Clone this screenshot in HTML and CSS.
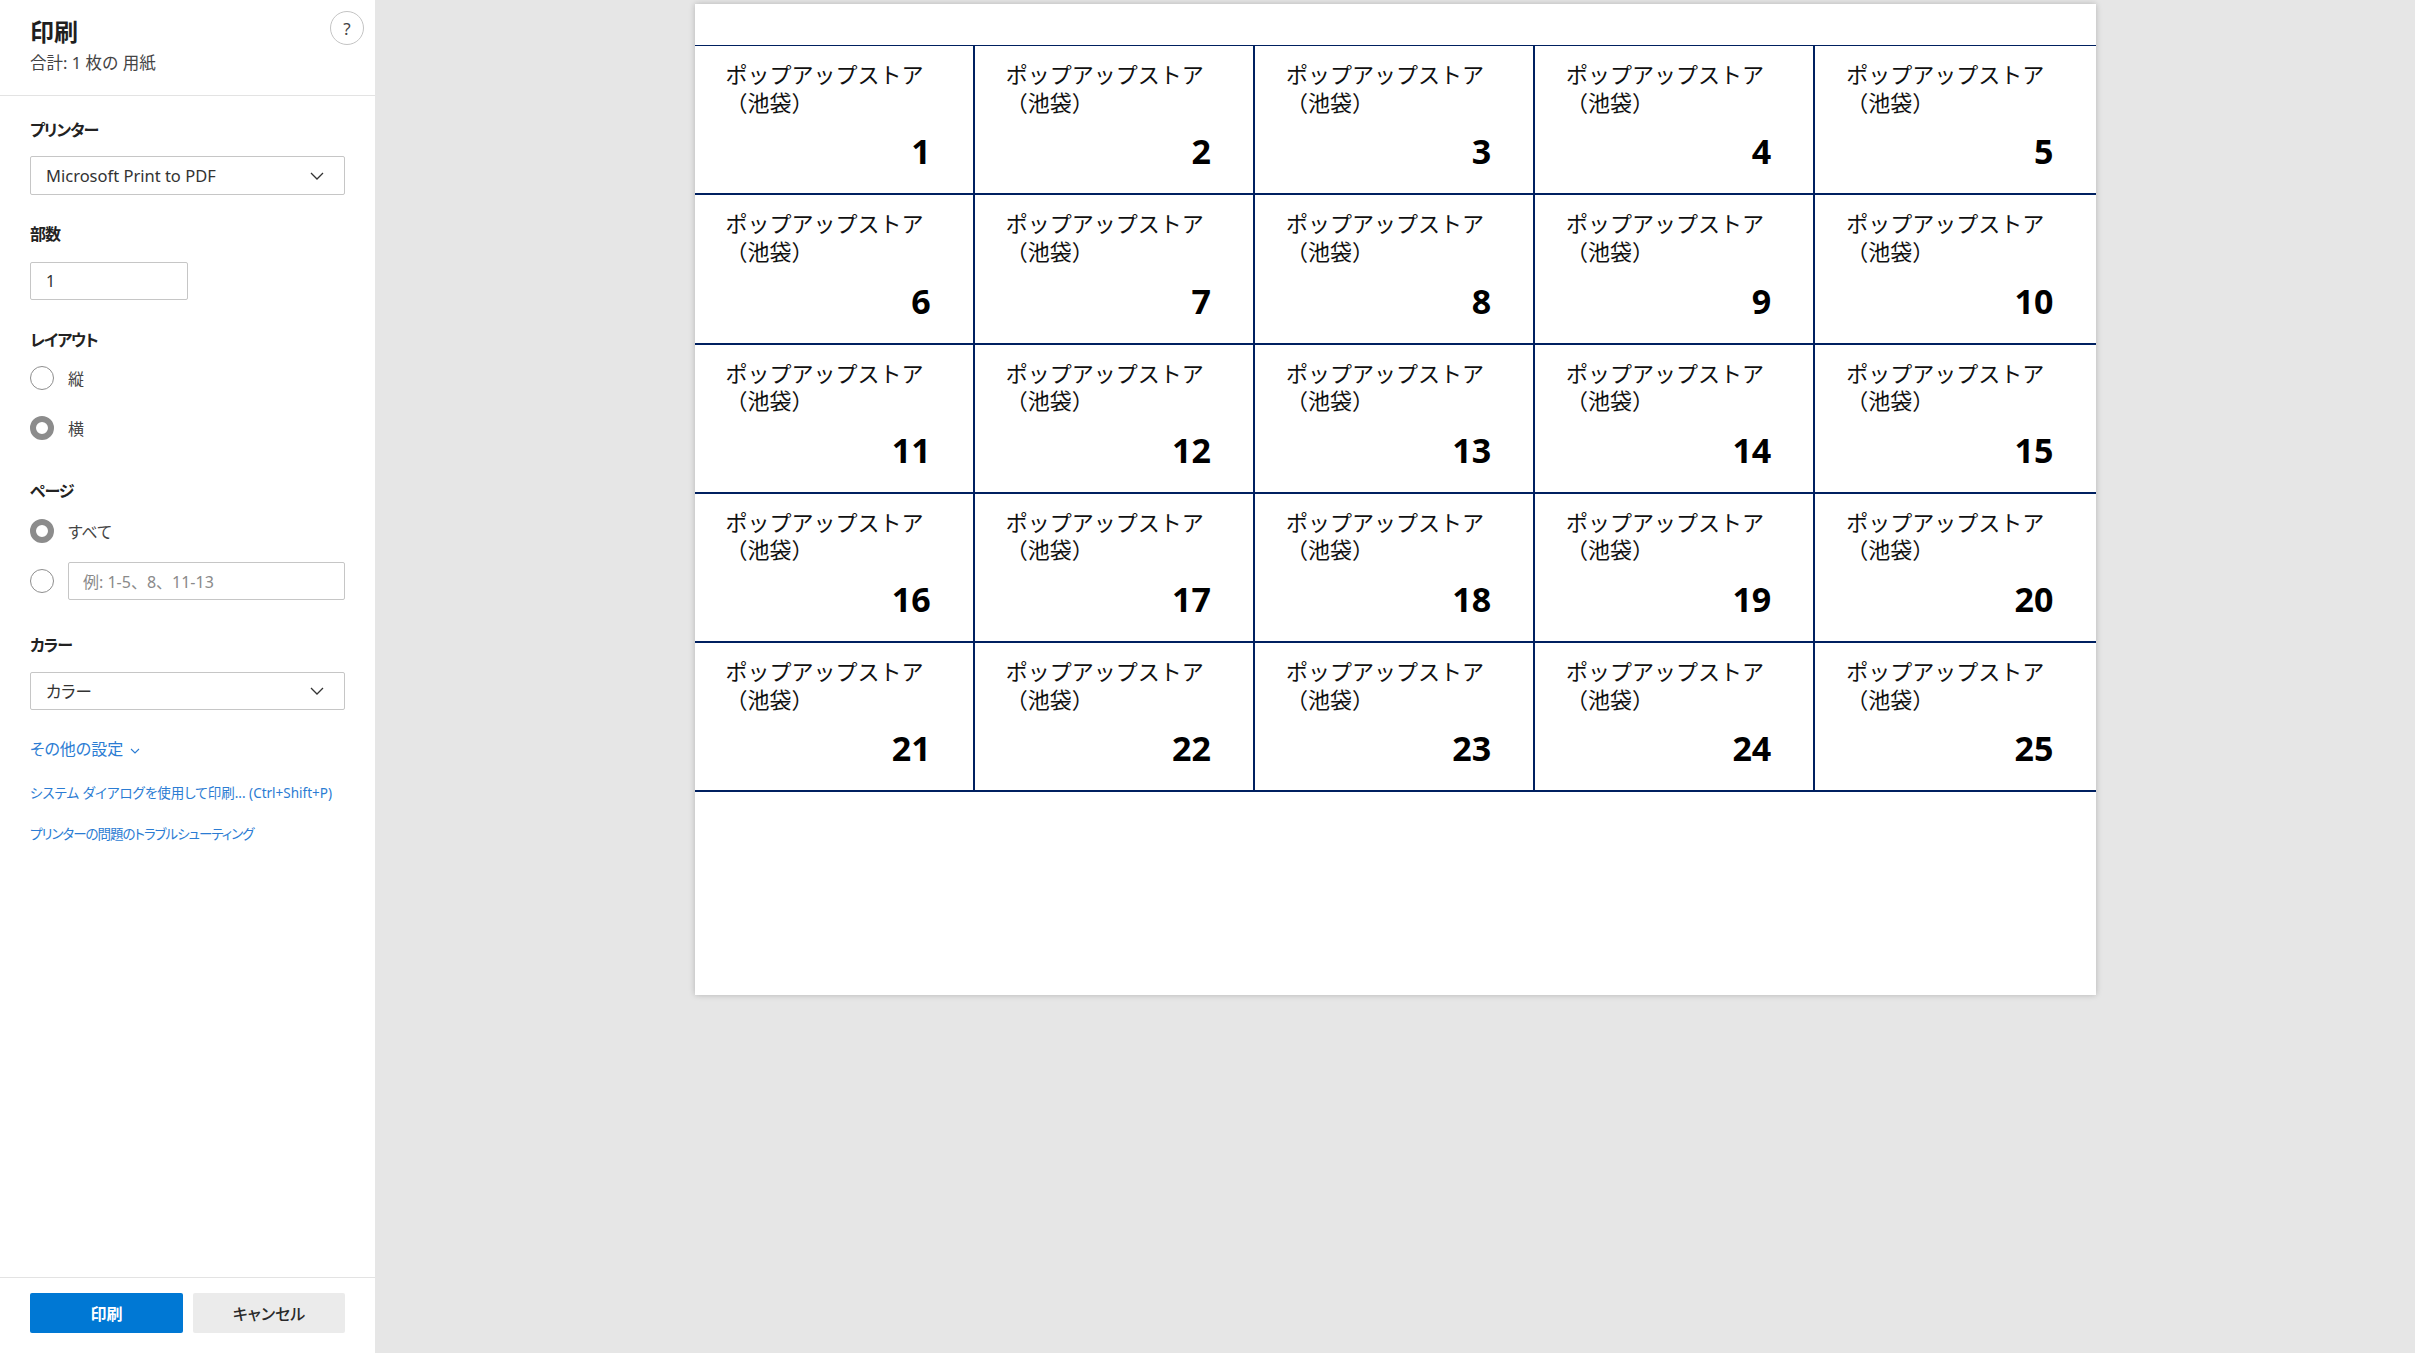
FILE: index.html
```html
<!DOCTYPE html>
<html lang="ja">
<head>
<meta charset="utf-8">
<title>印刷</title>
<link rel="stylesheet" href="styles.css">
</head>
<body>
<div class="app">
  <aside class="panel">
    <header class="panel-head">
      <div class="head-text">
        <h1 class="title">印刷</h1>
        <div class="subtitle">合計: 1 枚の 用紙</div>
      </div>
      <div class="help">?</div>
    </header>
    <div class="panel-body">
      <div class="label gap-23">プリンター</div>
      <div class="select gap-15">
        <span>Microsoft Print to PDF</span>
        <svg class="chev" width="14" height="8" viewBox="0 0 14 8"><path d="M1 1l6 6 6-6" fill="none" stroke="#333" stroke-width="1.3"/></svg>
      </div>
      <div class="label gap-28">部数</div>
      <div class="input copies gap-17">1</div>
      <div class="label gap-29">レイアウト</div>
      <div class="radio-row gap-7"><span class="radio"></span><span class="radio-label">縦</span></div>
      <div class="radio-row gap-10"><span class="radio on"></span><span class="radio-label">横</span></div>
      <div class="label gap-32">ページ</div>
      <div class="radio-row gap-9"><span class="radio on"></span><span class="radio-label">すべて</span></div>
      <div class="radio-row gap-10"><span class="radio"></span><div class="input range">例: 1-5、8、11-13</div></div>
      <div class="label gap-33">カラー</div>
      <div class="select short gap-16">
        <span>カラー</span>
        <svg class="chev" width="14" height="8" viewBox="0 0 14 8"><path d="M1 1l6 6 6-6" fill="none" stroke="#333" stroke-width="1.3"/></svg>
      </div>
      <div class="more gap-28">その他の設定 <svg class="more-chev" width="10" height="6" viewBox="0 0 10 6"><path d="M1 1l4 4 4-4" fill="none" stroke="#2b7cd3" stroke-width="1.1"/></svg></div>
      <div class="link gap-23">システム ダイアログを使用して印刷... (Ctrl+Shift+P)</div>
      <div class="link narrow gap-21">プリンターの問題のトラブルシューティング</div>
    </div>
    <footer class="panel-foot">
      <div class="btn primary">印刷</div>
      <div class="btn secondary">キャンセル</div>
    </footer>
  </aside>
  <main class="preview">
    <div class="page">
      <div class="sheet">
        <div class="cell"><div class="name">ポップアップストア<br>（池袋）</div><div class="num">1</div></div>
        <div class="cell"><div class="name">ポップアップストア<br>（池袋）</div><div class="num">2</div></div>
        <div class="cell"><div class="name">ポップアップストア<br>（池袋）</div><div class="num">3</div></div>
        <div class="cell"><div class="name">ポップアップストア<br>（池袋）</div><div class="num">4</div></div>
        <div class="cell"><div class="name">ポップアップストア<br>（池袋）</div><div class="num">5</div></div>
        <div class="cell"><div class="name">ポップアップストア<br>（池袋）</div><div class="num">6</div></div>
        <div class="cell"><div class="name">ポップアップストア<br>（池袋）</div><div class="num">7</div></div>
        <div class="cell"><div class="name">ポップアップストア<br>（池袋）</div><div class="num">8</div></div>
        <div class="cell"><div class="name">ポップアップストア<br>（池袋）</div><div class="num">9</div></div>
        <div class="cell"><div class="name">ポップアップストア<br>（池袋）</div><div class="num">10</div></div>
        <div class="cell"><div class="name">ポップアップストア<br>（池袋）</div><div class="num">11</div></div>
        <div class="cell"><div class="name">ポップアップストア<br>（池袋）</div><div class="num">12</div></div>
        <div class="cell"><div class="name">ポップアップストア<br>（池袋）</div><div class="num">13</div></div>
        <div class="cell"><div class="name">ポップアップストア<br>（池袋）</div><div class="num">14</div></div>
        <div class="cell"><div class="name">ポップアップストア<br>（池袋）</div><div class="num">15</div></div>
        <div class="cell"><div class="name">ポップアップストア<br>（池袋）</div><div class="num">16</div></div>
        <div class="cell"><div class="name">ポップアップストア<br>（池袋）</div><div class="num">17</div></div>
        <div class="cell"><div class="name">ポップアップストア<br>（池袋）</div><div class="num">18</div></div>
        <div class="cell"><div class="name">ポップアップストア<br>（池袋）</div><div class="num">19</div></div>
        <div class="cell"><div class="name">ポップアップストア<br>（池袋）</div><div class="num">20</div></div>
        <div class="cell"><div class="name">ポップアップストア<br>（池袋）</div><div class="num">21</div></div>
        <div class="cell"><div class="name">ポップアップストア<br>（池袋）</div><div class="num">22</div></div>
        <div class="cell"><div class="name">ポップアップストア<br>（池袋）</div><div class="num">23</div></div>
        <div class="cell"><div class="name">ポップアップストア<br>（池袋）</div><div class="num">24</div></div>
        <div class="cell"><div class="name">ポップアップストア<br>（池袋）</div><div class="num">25</div></div>
      </div>
    </div>
  </main>
</div>
</body>
</html>
```

FILE: styles.css
```css
* { box-sizing: border-box; }
html, body { margin: 0; padding: 0; }
body {
  width: 2415px;
  height: 1353px;
  overflow: hidden;
  font-family: "Noto Sans", "Noto Sans CJK JP", sans-serif;
  color: #222;
  background: #e6e6e6;
}
.app { display: flex; height: 1353px; }

/* ---------- left panel ---------- */
.panel {
  width: 375px;
  flex: 0 0 375px;
  background: #fff;
  display: flex;
  flex-direction: column;
  font-feature-settings: "palt";
}
.panel-head {
  height: 96px;
  border-bottom: 1px solid #e3e3e3;
  display: flex;
  justify-content: space-between;
  align-items: flex-start;
  padding: 0 11px 0 30px;
}
.head-text { padding-top: 17px; }
.title {
  margin: 0;
  font-size: 24px;
  line-height: 30px;
  font-weight: 700;
  color: #1f1f1f;
}
.subtitle {
  margin-top: 6px;
  font-size: 16.5px;
  line-height: 20px;
  color: #444;
  font-feature-settings: normal;
}
.help {
  margin-top: 11px;
  width: 34px;
  height: 34px;
  border: 1px solid #c4c4c4;
  border-radius: 50%;
  display: flex;
  align-items: center;
  justify-content: center;
  font-size: 17px;
  color: #444;
  font-family: "Noto Sans", sans-serif;
}
.panel-body {
  flex: 1;
  padding: 0 30px;
  display: flex;
  flex-direction: column;
  align-items: flex-start;
}
.label {
  font-size: 16px;
  line-height: 22px;
  font-weight: 700;
  letter-spacing: -1px;
  color: #222;
}
.select {
  width: 315px;
  height: 39px;
  border: 1px solid #c6c6c6;
  border-radius: 2px;
  display: flex;
  align-items: center;
  justify-content: space-between;
  padding: 0 20px 0 15px;
  font-size: 16.5px;
  color: #333;
}
.select.short { height: 38px; }
.chev { display: block; }
.input {
  height: 38px;
  border: 1px solid #c6c6c6;
  border-radius: 2px;
  display: flex;
  align-items: center;
  padding: 0 15px;
  font-size: 16px;
  color: #333;
}
.copies { width: 158px; }
.range {
  width: 277px;
  margin-left: 14px;
  color: #8a8a8a;
  padding-left: 14px;
  font-feature-settings: normal;
}
.radio-row {
  height: 40px;
  display: flex;
  align-items: center;
}
.radio {
  width: 24px;
  height: 24px;
  border-radius: 50%;
  border: 1px solid #8e8e8e;
  background: #fff;
  flex: 0 0 24px;
}
.radio.on { border: 6px solid #8c8c8c; }
.radio-label {
  margin-left: 14px;
  font-size: 16px;
  color: #444;
}
.more {
  font-size: 16px;
  line-height: 22px;
  color: #2b7cd3;
  display: flex;
  align-items: center;
}
.more-chev { margin-left: 7px; margin-top: 4px; }
.link {
  font-size: 13.5px;
  line-height: 20px;
  color: #2b7cd3;
}
.link.narrow { letter-spacing: -1px; }
.gap-7 { margin-top: 7px; }
.gap-9 { margin-top: 9px; }
.gap-10 { margin-top: 10px; }
.gap-15 { margin-top: 15px; }
.gap-16 { margin-top: 16px; }
.gap-17 { margin-top: 17px; }
.gap-21 { margin-top: 21px; }
.gap-23 { margin-top: 23px; }
.gap-28 { margin-top: 28px; }
.gap-29 { margin-top: 29px; }
.gap-32 { margin-top: 32px; }
.gap-33 { margin-top: 33px; }

.panel-foot {
  height: 76px;
  border-top: 1px solid #e3e3e3;
  padding: 15px 30px 0;
  display: flex;
  gap: 10px;
}
.btn {
  height: 40px;
  border-radius: 2px;
  display: flex;
  align-items: center;
  justify-content: center;
  font-size: 16px;
  font-weight: 700;
}
.primary { width: 153px; background: #0078d4; color: #fff; }
.secondary { width: 152px; background: #ebebeb; color: #2a2a2a; font-weight: 500; }

/* ---------- preview ---------- */
.preview {
  flex: 1;
  display: flex;
  justify-content: center;
  align-items: flex-start;
}
.page {
  width: 1401px;
  height: 991px;
  margin-top: 4px;
  background: #fff;
  box-shadow: 0 0 6px rgba(0, 0, 0, 0.22);
  padding-top: 41px;
}
.sheet {
  display: grid;
  grid-template-columns: repeat(5, 1fr);
  grid-auto-rows: 149.3px;
  border-top: 1px solid #002060;
}
.cell {
  border-bottom: 2px solid #002060;
  border-right: 2px solid #002060;
  display: flex;
  flex-direction: column;
  justify-content: space-between;
  padding: 14px 42px 22px 31px;
  color: #111;
}
.cell:nth-child(5n) { border-right: none; }
.name {
  font-family: "Noto Sans CJK JP", sans-serif;
  font-size: 22px;
  line-height: 27.5px;
}
.num {
  align-self: flex-end;
  font-family: "Noto Sans", sans-serif;
  font-weight: 700;
  font-size: 34px;
  line-height: 40px;
  color: #000;
}
```
